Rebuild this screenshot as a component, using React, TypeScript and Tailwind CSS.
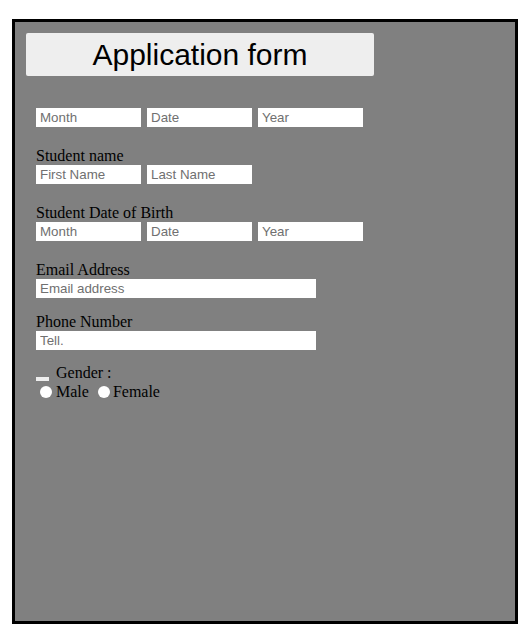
const inputCls =
  "block h-[19px] bg-white px-[4px] text-[13.33px] leading-[19px] text-black border-0 outline-none placeholder:text-[#707070] font-['Liberation_Sans',Arial,sans-serif]"

function Field({ placeholder, wide }: { placeholder: string; wide?: boolean }) {
  return <input type="text" placeholder={placeholder} className={`${inputCls} ${wide ? 'w-[280px]' : 'w-[105px]'}`} />
}

function Label({ children, className = '' }: { children: React.ReactNode; className?: string }) {
  return <div className={`text-[16px] leading-[18px] text-black ${className}`}>{children}</div>
}

export default function App() {
  return (
    <div className="min-h-[640px] bg-white pl-[12px] pt-[19px] font-['Liberation_Serif','Times_New_Roman',serif]">
      <div className="w-[506px] h-[605px] border-[3px] border-black bg-[#808080] px-[11px] pt-[11px]">
        <div className="w-[348px] h-[43px] rounded-[2px] bg-[#eeeeee] flex items-center justify-center font-['Liberation_Sans',Arial,sans-serif] text-[30px] text-black">
          Application form
        </div>

        <form className="pl-[10px] mt-[32px]">
          <div className="flex gap-[6px]">
            <Field placeholder="Month" />
            <Field placeholder="Date" />
            <Field placeholder="Year" />
          </div>

          <Label className="mt-[20px]">Student name</Label>
          <div className="flex gap-[6px]">
            <Field placeholder="First Name" />
            <Field placeholder="Last Name" />
          </div>

          <Label className="mt-[20px]">Student Date of Birth</Label>
          <div className="flex gap-[6px]">
            <Field placeholder="Month" />
            <Field placeholder="Date" />
            <Field placeholder="Year" />
          </div>

          <Label className="mt-[20px]">Email Address</Label>
          <Field placeholder="Email address" wide />

          <Label className="mt-[15px]">Phone Number</Label>
          <Field placeholder="Tell." wide />

          <div className="mt-[14px] flex items-end text-[16px] leading-[18px] text-black">
            <span className="mb-[1px] mr-[7px] inline-block w-[13px] h-[4px] bg-[#eeeeee]"></span>
            <span>Gender :</span>
          </div>
          <div className="flex items-center text-[16px] leading-[20px] text-black pl-[4px]">
            <span className="inline-block w-[12px] h-[12px] rounded-full bg-white mr-[4px]"></span>
            <span>Male</span>
            <span className="inline-block w-[12px] h-[12px] rounded-full bg-white ml-[9px] mr-[3px]"></span>
            <span>Female</span>
          </div>
        </form>
      </div>
    </div>
  )
}
